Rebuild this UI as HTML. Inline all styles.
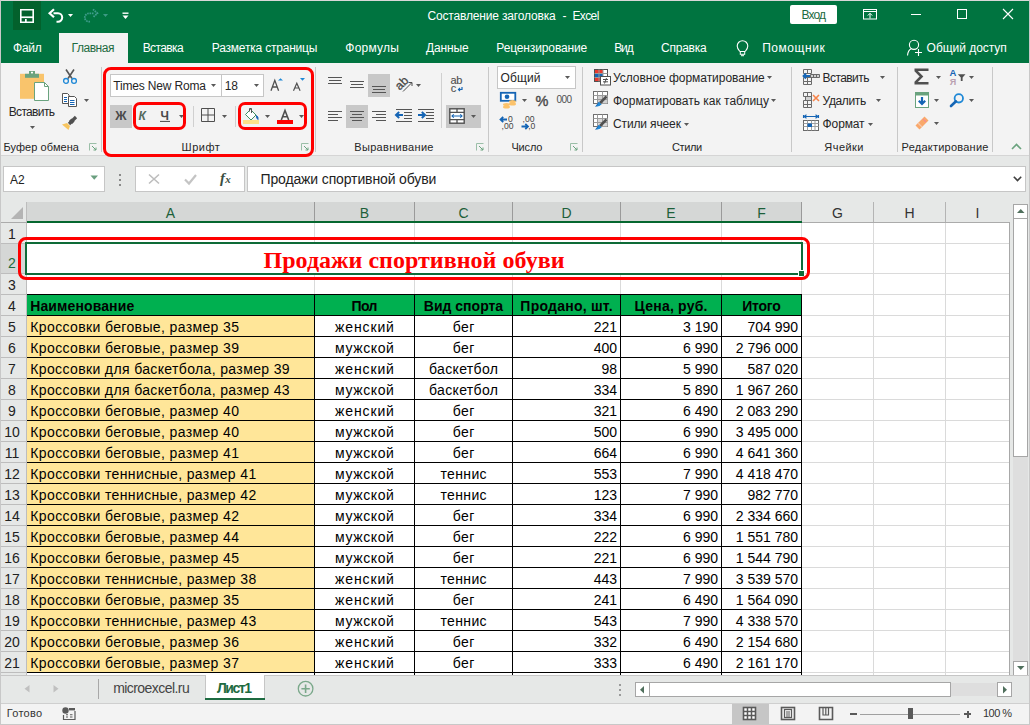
<!DOCTYPE html>
<html><head><meta charset="utf-8"><title>Excel</title>
<style>
html,body{margin:0;padding:0;}
body{width:1030px;height:725px;overflow:hidden;position:relative;background:#f3f3f3;font-family:"Liberation Sans",sans-serif;}
body>div,body>span,body>svg{position:absolute;}
.t{white-space:pre;line-height:1;}
svg{overflow:visible;}
</style></head><body>
<div style="left:0px;top:0px;width:1030px;height:725px;background:#f3f3f3;"></div>
<div style="left:1px;top:1px;width:1028px;height:62px;background:#007440;"></div>
<div style="left:13px;top:1px;width:28px;height:29px;background:#03612c;"></div>
<div style="left:59px;top:33px;width:69px;height:30px;background:#f3f3f3;"></div>
<svg style="left:19px;top:8px;" width="16" height="16" viewBox="0 0 16 16">
<path d="M1.8 1.8H14.2V14.2H1.8Z" fill="none" stroke="#fff" stroke-width="1.6"/>
<rect x="1.8" y="8.4" width="12.4" height="1.7" fill="#fff"/>
<rect x="6" y="11" width="1.7" height="3.5" fill="#fff"/>
</svg>
<svg style="left:47px;top:7px;" width="18" height="16" viewBox="0 0 18 16">
<path d="M7 2.3L2.6 6.3L7 10.3" fill="none" stroke="#fff" stroke-width="2.2"/>
<path d="M6.5 6.3H11A4.2 4.2 0 0 1 11 14.7H9.5" fill="none" stroke="#fff" stroke-width="2"/>
</svg>
<svg style="left:68px;top:14px;" width="5" height="3" viewBox="0 0 5 3"><path d="M0 0H5L2.5 3Z" fill="#fff"/></svg>
<svg style="left:82px;top:7px;" width="18" height="16" viewBox="0 0 18 16">
<path d="M11 2.3L15.4 6.3L11 10.3" fill="none" stroke="#3f9d8c" stroke-width="1.8" stroke-dasharray="1.6 0.8"/>
<path d="M11.5 6.3H7A4.2 4.2 0 0 0 7 14.7H8.5" fill="none" stroke="#3f9d8c" stroke-width="1.8" stroke-dasharray="1.6 0.8"/>
</svg>
<svg style="left:103px;top:14px;" width="5" height="3" viewBox="0 0 5 3"><path d="M0 0H5L2.5 3Z" fill="#3d9a85"/></svg>
<svg style="left:122px;top:12px;" width="7" height="8" viewBox="0 0 7 8"><rect x="0.5" y="0.5" width="6" height="1.4" fill="#fff"/><path d="M0.5 3.5H6.5L3.5 7Z" fill="#fff"/></svg>
<svg style="left:862px;top:8px;" width="16" height="12" viewBox="0 0 16 12">
<rect x="1.5" y="1.5" width="13" height="9.5" fill="none" stroke="#fff" stroke-width="1"/>
<path d="M1.5 3.5H14.5M8 10.5V5.5M5.8 7.5L8 5.3L10.2 7.5" fill="none" stroke="#fff" stroke-width="1"/>
</svg>
<div style="left:911px;top:14px;width:10px;height:1px;background:#fff;"></div>
<div style="left:957px;top:9px;width:10px;height:10px;border:1px solid #fff;box-sizing:border-box;"></div>
<svg style="left:1002px;top:8px;" width="12" height="12" viewBox="0 0 12 12"><path d="M1 1L11 11M11 1L1 11" stroke="#fff" stroke-width="1.1"/></svg>
<svg style="left:735px;top:39px;" width="15" height="19" viewBox="0 0 15 19">
<path d="M4.8 12.5C3 10.5 2.2 9 2.2 7A5.3 5.3 0 0 1 12.8 7C12.8 9 12 10.5 10.2 12.5" fill="none" stroke="#fff" stroke-width="1.1"/>
<rect x="5.3" y="12.5" width="4.4" height="2.8" fill="none" stroke="#fff" stroke-width="1"/>
<rect x="6" y="16.2" width="3" height="1" fill="#fff"/>
</svg>
<svg style="left:905px;top:38px;" width="20" height="20" viewBox="0 0 20 20">
<circle cx="9" cy="6.8" r="4.6" fill="none" stroke="#fff" stroke-width="1.1"/>
<path d="M6.3 10.7Q3 12 2.5 17.5" fill="none" stroke="#fff" stroke-width="1.1"/>
<path d="M13.5 11V18M10 14.5H17" stroke="#fff" stroke-width="1.1"/>
</svg>
<span class="t" style="top:9.84px;color:#fff;font-size:12px;font-family:'Liberation Sans', sans-serif;font-weight:normal;letter-spacing:-0.168px;left:427.5px;">Составление заголовка</span>
<span class="t" style="top:9.84px;color:#fff;font-size:12px;font-family:'Liberation Sans', sans-serif;font-weight:normal;left:562.6px;">-</span>
<span class="t" style="top:9.84px;color:#fff;font-size:12px;font-family:'Liberation Sans', sans-serif;font-weight:normal;letter-spacing:-0.636px;left:572.5px;">Excel</span>
<div style="left:790px;top:5px;width:47px;height:19px;background:#fff;border-radius:2px;"></div>
<span class="t" style="top:8.84px;color:#1d6b41;font-size:12px;font-family:'Liberation Sans', sans-serif;font-weight:normal;letter-spacing:-0.919px;left:801.6px;">Вход</span>
<span class="t" style="top:41.84px;color:#fff;font-size:12px;font-family:'Liberation Sans', sans-serif;font-weight:normal;letter-spacing:-0.305px;left:13.1px;">Файл</span>
<span class="t" style="top:41.84px;color:#1e6b41;font-size:12px;font-family:'Liberation Sans', sans-serif;font-weight:normal;letter-spacing:-0.448px;left:71.5px;">Главная</span>
<span class="t" style="top:41.84px;color:#fff;font-size:12px;font-family:'Liberation Sans', sans-serif;font-weight:normal;letter-spacing:-0.602px;left:142.7px;">Вставка</span>
<span class="t" style="top:41.84px;color:#fff;font-size:12px;font-family:'Liberation Sans', sans-serif;font-weight:normal;letter-spacing:-0.205px;left:211.8px;">Разметка страницы</span>
<span class="t" style="top:41.84px;color:#fff;font-size:12px;font-family:'Liberation Sans', sans-serif;font-weight:normal;letter-spacing:0.214px;left:345.3px;">Формулы</span>
<span class="t" style="top:41.84px;color:#fff;font-size:12px;font-family:'Liberation Sans', sans-serif;font-weight:normal;letter-spacing:-0.152px;left:426px;">Данные</span>
<span class="t" style="top:41.84px;color:#fff;font-size:12px;font-family:'Liberation Sans', sans-serif;font-weight:normal;letter-spacing:-0.129px;left:496.3px;">Рецензирование</span>
<span class="t" style="top:41.84px;color:#fff;font-size:12px;font-family:'Liberation Sans', sans-serif;font-weight:normal;letter-spacing:-1.109px;left:614.2px;">Вид</span>
<span class="t" style="top:41.84px;color:#fff;font-size:12px;font-family:'Liberation Sans', sans-serif;font-weight:normal;letter-spacing:-0.230px;left:661px;">Справка</span>
<span class="t" style="top:41.84px;color:#fff;font-size:12px;font-family:'Liberation Sans', sans-serif;font-weight:normal;letter-spacing:0.545px;left:762.2px;">Помощник</span>
<span class="t" style="top:41.84px;color:#fff;font-size:12px;font-family:'Liberation Sans', sans-serif;font-weight:normal;letter-spacing:-0.039px;left:926.6px;">Общий доступ</span>
<div style="left:1px;top:63px;width:1028px;height:92px;background:#f3f3f3;"></div>
<div style="left:1px;top:155px;width:1028px;height:1px;background:#d5d5d5;"></div>
<span class="t" style="top:141.69px;color:#262626;font-size:11px;font-family:'Liberation Sans', sans-serif;font-weight:normal;letter-spacing:0.077px;left:3.4px;">Буфер обмена</span>
<span class="t" style="top:141.69px;color:#262626;font-size:11px;font-family:'Liberation Sans', sans-serif;font-weight:normal;letter-spacing:0.499px;left:181.6px;">Шрифт</span>
<span class="t" style="top:141.69px;color:#262626;font-size:11px;font-family:'Liberation Sans', sans-serif;font-weight:normal;letter-spacing:0.316px;left:354.3px;">Выравнивание</span>
<span class="t" style="top:141.69px;color:#262626;font-size:11px;font-family:'Liberation Sans', sans-serif;font-weight:normal;letter-spacing:-0.160px;left:511.4px;">Число</span>
<span class="t" style="top:141.69px;color:#262626;font-size:11px;font-family:'Liberation Sans', sans-serif;font-weight:normal;letter-spacing:-0.351px;left:671.9px;">Стили</span>
<span class="t" style="top:141.69px;color:#262626;font-size:11px;font-family:'Liberation Sans', sans-serif;font-weight:normal;letter-spacing:0.459px;left:824.3px;">Ячейки</span>
<span class="t" style="top:141.69px;color:#262626;font-size:11px;font-family:'Liberation Sans', sans-serif;font-weight:normal;letter-spacing:0.231px;left:901.6px;">Редактирование</span>
<div style="left:101px;top:67px;width:1px;height:85px;background:#c8c8c8;"></div>
<div style="left:315px;top:67px;width:1px;height:85px;background:#c8c8c8;"></div>
<div style="left:488px;top:67px;width:1px;height:85px;background:#c8c8c8;"></div>
<div style="left:582px;top:67px;width:1px;height:85px;background:#c8c8c8;"></div>
<div style="left:791px;top:67px;width:1px;height:85px;background:#c8c8c8;"></div>
<div style="left:897px;top:67px;width:1px;height:85px;background:#c8c8c8;"></div>
<div style="left:992px;top:67px;width:1px;height:85px;background:#c8c8c8;"></div>
<svg style="left:19px;top:70px;" width="32" height="32" viewBox="0 0 32 32">
<rect x="1" y="3.8" width="24" height="25" fill="#f9c46c"/>
<rect x="6" y="3.8" width="14" height="4" fill="#6aa37e"/>
<rect x="10" y="1" width="6" height="3.5" fill="#6aa37e"/>
<rect x="12" y="1.8" width="2" height="1.6" fill="#fff"/>
<path d="M15.5 12.5H25.5L29.5 16.5V30.5H15.5Z" fill="#fff" stroke="#6aa37e" stroke-width="1"/>
<path d="M25.5 12.5V16.5H29.5" fill="none" stroke="#6aa37e" stroke-width="1"/>
</svg>
<span class="t" style="top:105.84px;color:#262626;font-size:12px;font-family:'Liberation Sans', sans-serif;font-weight:normal;letter-spacing:-0.654px;left:8.7px;">Вставить</span>
<svg style="left:30px;top:126px;" width="5" height="3" viewBox="0 0 5 3"><path d="M0 0H5L2.5 3Z" fill="#595959"/></svg>
<svg style="left:62px;top:68px;" width="16" height="16" viewBox="0 0 16 16">
<path d="M4 1.5L10 10.5M12 1.5L6 10.5" stroke="#555" stroke-width="1.6" fill="none"/>
<circle cx="4" cy="12.9" r="2.4" fill="none" stroke="#1e88d6" stroke-width="1.3"/>
<circle cx="12" cy="12.9" r="2.4" fill="none" stroke="#1e88d6" stroke-width="1.3"/>
</svg>
<svg style="left:61px;top:92px;" width="18" height="16" viewBox="0 0 18 16">
<path d="M1.5 1.5H6.5L8 3V11.5H1.5Z" fill="#fff" stroke="#555" stroke-width="1"/>
<path d="M3 5.5H6M3 7.5H6M3 9.5H6" stroke="#1565b5" stroke-width="1"/>
<path d="M7.5 4.5H13.5L15.5 6.5V14.5H7.5Z" fill="#fff" stroke="#555" stroke-width="1"/>
<path d="M9 8.5H13.5M9 10.5H13.5M9 12.5H13.5" stroke="#1565b5" stroke-width="1"/>
</svg>
<svg style="left:84px;top:99px;" width="5" height="3" viewBox="0 0 5 3"><path d="M0 0H5L2.5 3Z" fill="#595959"/></svg>
<svg style="left:61px;top:115px;" width="18" height="16" viewBox="0 0 18 16">
<path d="M8 9L15 2" stroke="#505050" stroke-width="3.2"/>
<path d="M9.5 7.5L12 5" stroke="#505050" stroke-width="4.5"/>
<path d="M1 9.5L6 8L9 11L7.5 15Z" fill="#f7c560"/>
</svg>
<svg style="left:89px;top:143px;" width="8" height="8" viewBox="0 0 8 8"><path d="M0.5 7.5V0.5H7.5" fill="none" stroke="#9bbfa8" stroke-width="1"/><path d="M3 3L7 7M7 4.5V7H4.5" fill="none" stroke="#6aa37e" stroke-width="1"/></svg>
<svg style="left:301px;top:143px;" width="8" height="8" viewBox="0 0 8 8"><path d="M0.5 7.5V0.5H7.5" fill="none" stroke="#9bbfa8" stroke-width="1"/><path d="M3 3L7 7M7 4.5V7H4.5" fill="none" stroke="#6aa37e" stroke-width="1"/></svg>
<svg style="left:476px;top:143px;" width="8" height="8" viewBox="0 0 8 8"><path d="M0.5 7.5V0.5H7.5" fill="none" stroke="#9bbfa8" stroke-width="1"/><path d="M3 3L7 7M7 4.5V7H4.5" fill="none" stroke="#6aa37e" stroke-width="1"/></svg>
<svg style="left:570px;top:143px;" width="8" height="8" viewBox="0 0 8 8"><path d="M0.5 7.5V0.5H7.5" fill="none" stroke="#9bbfa8" stroke-width="1"/><path d="M3 3L7 7M7 4.5V7H4.5" fill="none" stroke="#6aa37e" stroke-width="1"/></svg>
<div style="left:110px;top:74px;width:110px;height:21px;background:#fff;border:1px solid #c6c6c6;box-sizing:content-box;"></div>
<div style="left:221px;top:74px;width:41px;height:21px;background:#fff;border:1px solid #c6c6c6;box-sizing:content-box;"></div>
<span class="t" style="top:79.84px;color:#262626;font-size:12px;font-family:'Liberation Sans', sans-serif;font-weight:normal;letter-spacing:-0.170px;left:113.3px;">Times New Roma</span>
<svg style="left:211px;top:84.3px;" width="5" height="3" viewBox="0 0 5 3"><path d="M0 0H5L2.5 3Z" fill="#595959"/></svg>
<span class="t" style="top:79.84px;color:#262626;font-size:12px;font-family:'Liberation Sans', sans-serif;font-weight:normal;left:224.7px;">18</span>
<svg style="left:254px;top:84.3px;" width="5" height="3" viewBox="0 0 5 3"><path d="M0 0H5L2.5 3Z" fill="#595959"/></svg>
<svg style="left:270px;top:77px;" width="36" height="15" viewBox="0 0 36 15">
<path d="M1 13.7L4.8 3.3L8.6 13.7M2.4 10H7.2" fill="none" stroke="#505050" stroke-width="1.3"/>
<path d="M8 3.6L10.5 1.2L13 3.6Z" fill="#1e88d6"/>
<path d="M23.5 13.7L26.8 6.3L30.1 13.7M24.7 11H28.9" fill="none" stroke="#505050" stroke-width="1.2"/>
<path d="M30 1L35 1L32.5 3.8Z" fill="#1e88d6"/>
</svg>
<div style="left:110px;top:105px;width:22px;height:23px;background:#c8c8c8;"></div>
<svg style="left:113px;top:110px;" width="16" height="11" viewBox="0 0 16 11">
<text x="8" y="9.8" text-anchor="middle" font-family="Liberation Sans" font-weight="bold" font-size="12.5" fill="#4a4a4a">Ж</text>
</svg>
<svg style="left:137px;top:110px;" width="11" height="11" viewBox="0 0 11 11">
<text x="5.2" y="9.8" text-anchor="middle" font-family="Liberation Sans" font-weight="bold" font-style="italic" font-size="12" fill="#566a5c">К</text>
</svg>
<svg style="left:159px;top:110px;" width="12" height="13" viewBox="0 0 12 13">
<text x="5.8" y="9.8" text-anchor="middle" font-family="Liberation Sans" font-weight="bold" font-size="12" fill="#4a4a4a">Ч</text>
<rect x="1" y="10.9" width="10" height="1" fill="#4a4a4a"/>
</svg>
<svg style="left:179px;top:115px;" width="5" height="3" viewBox="0 0 5 3"><path d="M0 0H5L2.5 3Z" fill="#595959"/></svg>
<div style="left:193px;top:106px;width:1px;height:21px;background:#d0d0d0;"></div>
<svg style="left:201px;top:108px;" width="14" height="14" viewBox="0 0 14 14">
<path d="M0.5 0.5H13.5V13.5H0.5ZM7 0.5V13.5M0.5 7H13.5" fill="none" stroke="#4f4f4f" stroke-width="1"/>
</svg>
<svg style="left:222px;top:115px;" width="5" height="3" viewBox="0 0 5 3"><path d="M0 0H5L2.5 3Z" fill="#595959"/></svg>
<div style="left:235px;top:106px;width:1px;height:21px;background:#d0d0d0;"></div>
<svg style="left:243px;top:107px;" width="17" height="17" viewBox="0 0 17 17">
<path d="M2.5 7.5L7.5 2.5L13 8L8 13Z" fill="#fff" stroke="#3d8f62" stroke-width="1"/>
<path d="M6.5 4.5V1.5H8.5V6" fill="none" stroke="#555" stroke-width="1"/>
<path d="M13.5 8.5Q15.5 10 15 12.5Q13 11 13.5 8.5Z" fill="#1565b5" stroke="#1565b5" stroke-width="1"/>
<rect x="0" y="13" width="16" height="4" fill="#fde28a"/>
</svg>
<svg style="left:265px;top:115px;" width="5" height="3" viewBox="0 0 5 3"><path d="M0 0H5L2.5 3Z" fill="#595959"/></svg>
<svg style="left:277px;top:109px;" width="16" height="15" viewBox="0 0 16 15">
<path d="M4.3 11L8 1.5L11.7 11M5.6 7.7H10.4" fill="none" stroke="#505050" stroke-width="1.6"/>
<rect x="0" y="11" width="16" height="4" fill="#f00"/>
</svg>
<svg style="left:299px;top:115px;" width="5" height="3" viewBox="0 0 5 3"><path d="M0 0H5L2.5 3Z" fill="#595959"/></svg>
<div style="left:368px;top:74px;width:22px;height:23px;background:#c8c8c8;"></div>
<div style="left:346px;top:105px;width:22px;height:23px;background:#c8c8c8;"></div>
<div style="left:446px;top:105px;width:35px;height:23px;background:#c8c8c8;"></div>
<div style="left:328px;top:77px;width:14px;height:1px;background:#555;"></div>
<div style="left:329px;top:80px;width:12px;height:1px;background:#555;"></div>
<div style="left:328px;top:83px;width:14px;height:1px;background:#555;"></div>
<div style="left:350px;top:81px;width:14px;height:1px;background:#555;"></div>
<div style="left:351px;top:84px;width:12px;height:1px;background:#555;"></div>
<div style="left:350px;top:87px;width:14px;height:1px;background:#555;"></div>
<div style="left:372px;top:86px;width:14px;height:1px;background:#555;"></div>
<div style="left:373px;top:89px;width:12px;height:1px;background:#555;"></div>
<div style="left:372px;top:92px;width:14px;height:1px;background:#555;"></div>
<svg style="left:394px;top:75px;" width="20" height="18" viewBox="0 0 20 18">
<text x="0" y="0" transform="translate(7.6 8.2) rotate(-45)" text-anchor="middle" font-family="Liberation Sans" font-size="12" fill="#454545" dy="4" stroke="#454545" stroke-width="0.3">ab</text>
<path d="M9 16.5L17.5 8" stroke="#4d4d4d" stroke-width="1"/>
<path d="M14.5 7.5H18V11" fill="none" stroke="#4d4d4d" stroke-width="1"/>
</svg>
<svg style="left:416px;top:84px;" width="5" height="3" viewBox="0 0 5 3"><path d="M0 0H5L2.5 3Z" fill="#595959"/></svg>
<div style="left:328px;top:111px;width:14px;height:1px;background:#555;"></div>
<div style="left:328px;top:114px;width:10px;height:1px;background:#555;"></div>
<div style="left:328px;top:117px;width:14px;height:1px;background:#555;"></div>
<div style="left:328px;top:120px;width:10px;height:1px;background:#555;"></div>
<div style="left:350px;top:111px;width:14px;height:1px;background:#555;"></div>
<div style="left:352px;top:114px;width:10px;height:1px;background:#555;"></div>
<div style="left:350px;top:117px;width:14px;height:1px;background:#555;"></div>
<div style="left:352px;top:120px;width:10px;height:1px;background:#555;"></div>
<div style="left:372px;top:111px;width:14px;height:1px;background:#555;"></div>
<div style="left:376px;top:114px;width:10px;height:1px;background:#555;"></div>
<div style="left:372px;top:117px;width:14px;height:1px;background:#555;"></div>
<div style="left:376px;top:120px;width:10px;height:1px;background:#555;"></div>
<div style="left:396px;top:109px;width:16px;height:1px;background:#555;"></div>
<div style="left:404px;top:112px;width:8px;height:1px;background:#555;"></div>
<div style="left:404px;top:115px;width:8px;height:1px;background:#555;"></div>
<div style="left:404px;top:118px;width:8px;height:1px;background:#555;"></div>
<div style="left:396px;top:121px;width:16px;height:1px;background:#555;"></div>
<svg style="left:395px;top:111px;" width="9" height="8" viewBox="0 0 9 8"><path d="M1 4H8M4.2 1L1 4L4.2 7" fill="none" stroke="#1565b5" stroke-width="2"/></svg>
<div style="left:418px;top:109px;width:16px;height:1px;background:#555;"></div>
<div style="left:426px;top:112px;width:8px;height:1px;background:#555;"></div>
<div style="left:426px;top:115px;width:8px;height:1px;background:#555;"></div>
<div style="left:426px;top:118px;width:8px;height:1px;background:#555;"></div>
<div style="left:418px;top:121px;width:16px;height:1px;background:#555;"></div>
<svg style="left:418px;top:111px;" width="9" height="8" viewBox="0 0 9 8"><path d="M0 4H7M3.8 1L7 4L3.8 7" fill="none" stroke="#1565b5" stroke-width="2"/></svg>
<div style="left:441px;top:73px;width:1px;height:55px;background:#d0d0d0;"></div>
<svg style="left:449px;top:75px;" width="16" height="18" viewBox="0 0 16 18">
<text x="1.5" y="9.3" font-family="Liberation Sans" font-size="11" fill="#505050" stroke="#505050" stroke-width="0.12" letter-spacing="-0.3">ab</text>
<text x="1.8" y="16.9" font-family="Liberation Sans" font-size="11" fill="#505050" stroke="#505050" stroke-width="0.12">c</text>
<path d="M13 12V14.5H9.5M11 13L9.5 14.5L11 16" fill="none" stroke="#1565b5" stroke-width="1.2"/>
</svg>
<svg style="left:449px;top:108px;" width="16" height="16" viewBox="0 0 16 16">
<rect x="0.8" y="0.8" width="14.4" height="14.4" fill="#fff" stroke="#505050" stroke-width="1.4"/>
<path d="M0.8 4.3H15.2M0.8 11.7H15.2M8 0.8V4.3M8 11.7V15.2" stroke="#505050" stroke-width="1.3"/>
<path d="M3.2 8H12.8" stroke="#1565b5" stroke-width="1"/>
<path d="M4.8 6.3L3 8L4.8 9.7M11.2 6.3L13 8L11.2 9.7" fill="none" stroke="#1565b5" stroke-width="1.1"/>
</svg>
<svg style="left:471px;top:115px;" width="5" height="3" viewBox="0 0 5 3"><path d="M0 0H5L2.5 3Z" fill="#595959"/></svg>
<div style="left:497px;top:66px;width:77px;height:21px;background:#fff;border:1px solid #c6c6c6;box-sizing:content-box;"></div>
<span class="t" style="top:71.84px;color:#262626;font-size:12px;font-family:'Liberation Sans', sans-serif;font-weight:normal;letter-spacing:0.125px;left:500.5px;">Общий</span>
<svg style="left:565px;top:76px;" width="5" height="3" viewBox="0 0 5 3"><path d="M0 0H5L2.5 3Z" fill="#595959"/></svg>
<svg style="left:499px;top:91px;" width="20" height="18" viewBox="0 0 20 18">
<rect x="1.8" y="1.8" width="14.5" height="8" fill="#fff" stroke="#1565b5" stroke-width="1.8"/>
<circle cx="8" cy="5.8" r="2.3" fill="#1565b5"/>
<ellipse cx="13.5" cy="10.5" rx="3.5" ry="1.5" fill="#fbc26b"/>
<ellipse cx="13.5" cy="13" rx="3.5" ry="1.5" fill="#fbc26b"/>
<ellipse cx="7.5" cy="13.5" rx="3.5" ry="1.5" fill="#fbc26b"/>
<ellipse cx="7.5" cy="16" rx="3.5" ry="1.5" fill="#fbc26b"/>
</svg>
<svg style="left:522px;top:99px;" width="5" height="3" viewBox="0 0 5 3"><path d="M0 0H5L2.5 3Z" fill="#595959"/></svg>
<svg style="left:535px;top:93px;" width="16" height="15" viewBox="0 0 16 15"><text x="7" y="12.8" text-anchor="middle" font-family="Liberation Sans" font-size="14.5" fill="#4a4a4a" stroke="#4a4a4a" stroke-width="0.4">%</text></svg>
<svg style="left:555px;top:94px;" width="18" height="10" viewBox="0 0 18 10"><text x="9" y="8.9" text-anchor="middle" font-family="Liberation Sans" font-size="10" fill="#505050" letter-spacing="-0.5">000</text></svg>
<svg style="left:499px;top:115px;" width="18" height="16" viewBox="0 0 18 16">
<path d="M1.5 4.5H8M4.2 1.8L1.5 4.5L4.2 7.2" fill="none" stroke="#1565b5" stroke-width="1.8"/>
<text x="9" y="6.8" font-family="Liberation Sans" font-size="8.6" fill="#454545">0</text>
<text x="2.6" y="14" font-family="Liberation Sans" font-size="8.6" fill="#454545">,00</text>
</svg>
<svg style="left:520px;top:115px;" width="18" height="16" viewBox="0 0 18 16">
<text x="2.6" y="6.8" font-family="Liberation Sans" font-size="8.6" fill="#454545">,00</text>
<path d="M1.5 11.5H8M5.3 8.8L8 11.5L5.3 14.2" fill="none" stroke="#1565b5" stroke-width="1.8"/>
<text x="8.2" y="14" font-family="Liberation Sans" font-size="8.6" fill="#454545">,0</text>
</svg>
<svg style="left:593px;top:68px;" width="19" height="18" viewBox="0 0 19 18">
<rect x="1.5" y="1.5" width="13" height="12" fill="#fff" stroke="#505050" stroke-width="1"/>
<rect x="2" y="2" width="8" height="3" fill="#e8392e"/>
<rect x="2" y="6" width="8" height="3" fill="#1565b5"/>
<rect x="2" y="10" width="5" height="3" fill="#e8392e"/>
<path d="M6 1.5V13.5M10 1.5V13.5M1.5 5.5H14.5M1.5 9.5H14.5" stroke="#9a9a9a" stroke-width="1"/>
<rect x="7.5" y="8.5" width="10" height="8.5" fill="#fff" stroke="#505050" stroke-width="1"/>
<path d="M10 11.5H15M10 13.8H15M13.5 10L11.5 15.5" stroke="#505050" stroke-width="1" fill="none"/>
</svg>
<span class="t" style="top:71.54px;color:#262626;font-size:12px;font-family:'Liberation Sans', sans-serif;font-weight:normal;letter-spacing:-0.040px;left:613px;">Условное форматирование</span>
<svg style="left:767px;top:76px;" width="5" height="3" viewBox="0 0 5 3"><path d="M0 0H5L2.5 3Z" fill="#595959"/></svg>
<svg style="left:592px;top:90px;" width="18" height="18" viewBox="0 0 18 18">
<rect x="1.5" y="1.5" width="14" height="12" fill="#fff" stroke="#707070" stroke-width="1"/>
<rect x="5.5" y="5.5" width="10" height="8" fill="#d0d0d0"/>
<path d="M5.5 1.5V13.5M10.5 1.5V13.5M1.5 5.5H15.5M1.5 9.5H15.5" stroke="#9a9a9a" stroke-width="1"/>
<path d="M8 13L14.5 6.5" stroke="#505050" stroke-width="2.5"/>
<path d="M3 17L6.5 12L9.5 14.5Z" fill="#1565b5"/>
<path d="M4.5 16.5Q7 16.8 9.5 14.5L7 12Z" fill="#1e88d6"/>
</svg>
<span class="t" style="top:95.24px;color:#262626;font-size:12px;font-family:'Liberation Sans', sans-serif;font-weight:normal;letter-spacing:-0.006px;left:613px;">Форматировать как таблицу</span>
<svg style="left:771px;top:99px;" width="5" height="3" viewBox="0 0 5 3"><path d="M0 0H5L2.5 3Z" fill="#595959"/></svg>
<svg style="left:592px;top:113px;" width="18" height="18" viewBox="0 0 18 18">
<rect x="1.5" y="1.5" width="14" height="12" fill="#fff" stroke="#707070" stroke-width="1"/>
<rect x="5.5" y="5.5" width="10" height="8" fill="#d8d8d8"/>
<path d="M5.5 1.5V13.5M10.5 1.5V13.5M1.5 5.5H15.5M1.5 9.5H15.5" stroke="#9a9a9a" stroke-width="1"/>
<path d="M8 13L14.5 6.5" stroke="#505050" stroke-width="2.5"/>
<path d="M3 17L6.5 12L9.5 14.5Z" fill="#1565b5"/>
<path d="M4.5 16.5Q7 16.8 9.5 14.5L7 12Z" fill="#1e88d6"/>
</svg>
<span class="t" style="top:118.04px;color:#262626;font-size:12px;font-family:'Liberation Sans', sans-serif;font-weight:normal;letter-spacing:-0.137px;left:613px;">Стили ячеек</span>
<svg style="left:684px;top:122.5px;" width="5" height="3" viewBox="0 0 5 3"><path d="M0 0H5L2.5 3Z" fill="#595959"/></svg>
<svg style="left:802px;top:68px;" width="19" height="18" viewBox="0 0 19 18">
<path d="M1.5 1.5H9.5V5.5H1.5ZM1.5 9.5H9.5V13.5H1.5ZM1.5 13.5H9.5V16.5H1.5ZM5.5 9.5V16.5M5.5 1.5V5.5" fill="none" stroke="#6a6a6a" stroke-width="1"/>
<path d="M8.5 6.5H17.5V9.5H8.5ZM11.5 6.5V9.5M14.5 6.5V9.5" fill="#d0d0d0" stroke="#6a6a6a" stroke-width="1"/>
<path d="M1.5 8H8M4 5.5L1.5 8L4 10.5" fill="none" stroke="#1565b5" stroke-width="1.8"/>
</svg>
<span class="t" style="top:71.54px;color:#262626;font-size:12px;font-family:'Liberation Sans', sans-serif;font-weight:normal;letter-spacing:-0.582px;left:822.6px;">Вставить</span>
<svg style="left:880px;top:76px;" width="5" height="3" viewBox="0 0 5 3"><path d="M0 0H5L2.5 3Z" fill="#595959"/></svg>
<svg style="left:802px;top:91px;" width="19" height="18" viewBox="0 0 19 18">
<path d="M1.5 1.5H9.5V5.5H1.5ZM1.5 9.5H9.5V13.5H1.5ZM1.5 13.5H9.5V16.5H1.5ZM5.5 9.5V16.5M5.5 1.5V5.5" fill="none" stroke="#6a6a6a" stroke-width="1"/>
<rect x="3.5" y="5.5" width="6" height="4" fill="#d0d0d0" stroke="#6a6a6a" stroke-width="1"/>
<path d="M11 4L17 10M17 4L11 10" stroke="#f7844a" stroke-width="1.6"/>
</svg>
<span class="t" style="top:95.24px;color:#262626;font-size:12px;font-family:'Liberation Sans', sans-serif;font-weight:normal;letter-spacing:-0.371px;left:822.6px;">Удалить</span>
<svg style="left:876px;top:99px;" width="5" height="3" viewBox="0 0 5 3"><path d="M0 0H5L2.5 3Z" fill="#595959"/></svg>
<svg style="left:802px;top:114px;" width="19" height="18" viewBox="0 0 19 18">
<path d="M1.5 1V4M16.5 1V4M2 2.5H16M4.5 0.8L2 2.5L4.5 4.2M13.5 0.8L16 2.5L13.5 4.2" fill="none" stroke="#1565b5" stroke-width="1.1"/>
<rect x="1.5" y="6.5" width="15" height="10" fill="#fff" stroke="#6a6a6a" stroke-width="1"/>
<path d="M1.5 9.5H16.5M1.5 12.5H16.5M5.5 6.5V16.5M9.5 6.5V16.5M13 6.5V16.5" stroke="#a0a0a0" stroke-width="1"/>
<rect x="5.5" y="9.5" width="4.5" height="3.5" fill="#1565b5"/>
</svg>
<span class="t" style="top:118.04px;color:#262626;font-size:12px;font-family:'Liberation Sans', sans-serif;font-weight:normal;letter-spacing:-0.128px;left:822.6px;">Формат</span>
<svg style="left:868px;top:122.5px;" width="5" height="3" viewBox="0 0 5 3"><path d="M0 0H5L2.5 3Z" fill="#595959"/></svg>
<svg style="left:913px;top:68px;" width="17" height="17" viewBox="0 0 17 17"><path d="M1.5 1.8H15.5M1.5 15.2H15.5M2.2 2.2L8.5 8.5L2.2 14.8" fill="none" stroke="#505050" stroke-width="2.6"/></svg>
<svg style="left:936px;top:76px;" width="5" height="3" viewBox="0 0 5 3"><path d="M0 0H5L2.5 3Z" fill="#595959"/></svg>
<svg style="left:949px;top:67px;" width="18" height="19" viewBox="0 0 18 19">
<text x="4" y="8.5" text-anchor="middle" font-family="Liberation Sans" font-weight="bold" font-size="9.5" fill="#1565b5">А</text>
<text x="4" y="17.5" text-anchor="middle" font-family="Liberation Sans" font-weight="bold" font-size="9" fill="#b99fb0">Я</text>
<path d="M8.8 7.2H16.5L13.6 10.5V14H11.8V10.5Z" fill="#505050"/>
</svg>
<svg style="left:969px;top:76px;" width="5" height="3" viewBox="0 0 5 3"><path d="M0 0H5L2.5 3Z" fill="#595959"/></svg>
<svg style="left:914px;top:91px;" width="16" height="18" viewBox="0 0 16 18">
<rect x="1.5" y="1.5" width="13" height="15" fill="#fff" stroke="#6aa37e" stroke-width="1"/>
<rect x="1" y="1" width="14" height="3.5" fill="#6aa37e"/>
<path d="M8 6V13M4.8 9.8L8 13L11.2 9.8" fill="none" stroke="#1565b5" stroke-width="2.2"/>
</svg>
<svg style="left:934px;top:99px;" width="5" height="3" viewBox="0 0 5 3"><path d="M0 0H5L2.5 3Z" fill="#595959"/></svg>
<svg style="left:949px;top:92px;" width="17" height="16" viewBox="0 0 17 16">
<circle cx="9.8" cy="6.3" r="4.2" fill="none" stroke="#1e88d6" stroke-width="1.8"/>
<path d="M7 9.3L2 14" stroke="#1565b5" stroke-width="2.6" stroke-linecap="round"/>
</svg>
<svg style="left:969px;top:99px;" width="5" height="3" viewBox="0 0 5 3"><path d="M0 0H5L2.5 3Z" fill="#595959"/></svg>
<svg style="left:914px;top:115px;" width="16" height="15" viewBox="0 0 16 15">
<path d="M1.5 10.5L10.5 1.5L14.5 5.5L5.5 14.5Z" fill="#f9a86b"/>
<path d="M4 8L8 12" stroke="#f6c7a8" stroke-width="1.2"/>
<path d="M9 4L12 7" stroke="#f472b6" stroke-width="0.8"/>
</svg>
<svg style="left:934px;top:122px;" width="5" height="3" viewBox="0 0 5 3"><path d="M0 0H5L2.5 3Z" fill="#595959"/></svg>
<svg style="left:1011px;top:143px;" width="11" height="7" viewBox="0 0 11 7"><path d="M1 6L5.5 1.5L10 6" fill="none" stroke="#6aa37e" stroke-width="1.6"/></svg>
<div style="left:1px;top:156px;width:1028px;height:46px;background:#e6e8e7;"></div>
<div style="left:3px;top:166px;width:100px;height:24px;background:#fff;border:1px solid #c6c6c6;"></div>
<span class="t" style="top:173.84px;color:#222;font-size:12px;font-family:'Liberation Sans', sans-serif;font-weight:normal;left:10px;">A2</span>
<div style="left:135px;top:166px;width:108px;height:24px;background:#fff;border:1px solid #c6c6c6;"></div>
<div style="left:247px;top:166px;width:777px;height:24px;background:#fff;border:1px solid #c6c6c6;"></div>
<svg style="left:90px;top:175px;" width="9" height="6" viewBox="0 0 9 6"><path d="M0.5 0.5H8L4.25 4.8Z" fill="#6a9f7f"/></svg>
<div style="left:119px;top:174px;width:2px;height:2px;background:#8a8a8a;"></div>
<div style="left:119px;top:179px;width:2px;height:2px;background:#8a8a8a;"></div>
<div style="left:119px;top:184px;width:2px;height:2px;background:#8a8a8a;"></div>
<svg style="left:148px;top:174px;" width="12" height="10" viewBox="0 0 12 10"><path d="M1 0.5L11 9.5M11 0.5L1 9.5" stroke="#bdbdbd" stroke-width="1.6"/></svg>
<svg style="left:184px;top:174px;" width="13" height="11" viewBox="0 0 13 11"><path d="M1 5.5L5 9.5L12 1" fill="none" stroke="#c4c4c4" stroke-width="2.2"/></svg>
<svg style="left:218px;top:171px;" width="16" height="16" viewBox="0 0 16 16"><text x="2" y="12.3" font-family="Liberation Serif" font-style="italic" font-weight="bold" font-size="15" fill="#3a4f42">f</text><text x="7.3" y="12.3" font-family="Liberation Serif" font-style="italic" font-weight="bold" font-size="11" fill="#3a4f42">x</text></svg>
<svg style="left:1013px;top:176px;" width="9" height="6" viewBox="0 0 9 6"><path d="M0.8 0.8L4.5 4.5L8.2 0.8" fill="none" stroke="#404040" stroke-width="1.6"/></svg>
<span class="t" style="top:172.15px;color:#222;font-size:14px;font-family:'Liberation Sans', sans-serif;font-weight:normal;letter-spacing:-0.133px;left:260.5px;">Продажи спортивной обуви</span>
<div style="left:1px;top:202px;width:1011px;height:20px;background:#e6e8e7;"></div>
<div style="left:27px;top:202px;width:774px;height:19px;background:#d5d7d6;"></div>
<div style="left:27px;top:221px;width:775px;height:2px;background:#05672f;"></div>
<div style="left:27px;top:223px;width:983px;height:452px;background:#fff;"></div>
<div style="left:1px;top:223px;width:25px;height:452px;background:#e6e8e7;"></div>
<div style="left:1px;top:244px;width:25px;height:29px;background:#d5d7d6;"></div>
<div style="left:314px;top:223px;width:1px;height:452px;background:#dadada;"></div>
<div style="left:314px;top:202px;width:1px;height:20px;background:#9a9a9a;"></div>
<div style="left:414px;top:223px;width:1px;height:452px;background:#dadada;"></div>
<div style="left:414px;top:202px;width:1px;height:20px;background:#9a9a9a;"></div>
<div style="left:512px;top:223px;width:1px;height:452px;background:#dadada;"></div>
<div style="left:512px;top:202px;width:1px;height:20px;background:#9a9a9a;"></div>
<div style="left:620px;top:223px;width:1px;height:452px;background:#dadada;"></div>
<div style="left:620px;top:202px;width:1px;height:20px;background:#9a9a9a;"></div>
<div style="left:721px;top:223px;width:1px;height:452px;background:#dadada;"></div>
<div style="left:721px;top:202px;width:1px;height:20px;background:#9a9a9a;"></div>
<div style="left:801px;top:223px;width:1px;height:452px;background:#dadada;"></div>
<div style="left:801px;top:202px;width:1px;height:20px;background:#9a9a9a;"></div>
<div style="left:873px;top:223px;width:1px;height:452px;background:#dadada;"></div>
<div style="left:873px;top:202px;width:1px;height:20px;background:#b4b4b4;"></div>
<div style="left:945px;top:223px;width:1px;height:452px;background:#dadada;"></div>
<div style="left:945px;top:202px;width:1px;height:20px;background:#b4b4b4;"></div>
<div style="left:26px;top:202px;width:1px;height:473px;background:#bdbdbd;"></div>
<div style="left:27px;top:243px;width:983px;height:1px;background:#dadada;"></div>
<div style="left:1px;top:243px;width:25px;height:1px;background:#bdbdbd;"></div>
<div style="left:27px;top:273px;width:983px;height:1px;background:#dadada;"></div>
<div style="left:1px;top:273px;width:25px;height:1px;background:#bdbdbd;"></div>
<div style="left:27px;top:294px;width:983px;height:1px;background:#dadada;"></div>
<div style="left:1px;top:294px;width:25px;height:1px;background:#bdbdbd;"></div>
<div style="left:27px;top:315px;width:983px;height:1px;background:#dadada;"></div>
<div style="left:1px;top:315px;width:25px;height:1px;background:#bdbdbd;"></div>
<div style="left:27px;top:336px;width:983px;height:1px;background:#dadada;"></div>
<div style="left:1px;top:336px;width:25px;height:1px;background:#bdbdbd;"></div>
<div style="left:27px;top:357px;width:983px;height:1px;background:#dadada;"></div>
<div style="left:1px;top:357px;width:25px;height:1px;background:#bdbdbd;"></div>
<div style="left:27px;top:378px;width:983px;height:1px;background:#dadada;"></div>
<div style="left:1px;top:378px;width:25px;height:1px;background:#bdbdbd;"></div>
<div style="left:27px;top:399px;width:983px;height:1px;background:#dadada;"></div>
<div style="left:1px;top:399px;width:25px;height:1px;background:#bdbdbd;"></div>
<div style="left:27px;top:420px;width:983px;height:1px;background:#dadada;"></div>
<div style="left:1px;top:420px;width:25px;height:1px;background:#bdbdbd;"></div>
<div style="left:27px;top:441px;width:983px;height:1px;background:#dadada;"></div>
<div style="left:1px;top:441px;width:25px;height:1px;background:#bdbdbd;"></div>
<div style="left:27px;top:462px;width:983px;height:1px;background:#dadada;"></div>
<div style="left:1px;top:462px;width:25px;height:1px;background:#bdbdbd;"></div>
<div style="left:27px;top:483px;width:983px;height:1px;background:#dadada;"></div>
<div style="left:1px;top:483px;width:25px;height:1px;background:#bdbdbd;"></div>
<div style="left:27px;top:504px;width:983px;height:1px;background:#dadada;"></div>
<div style="left:1px;top:504px;width:25px;height:1px;background:#bdbdbd;"></div>
<div style="left:27px;top:525px;width:983px;height:1px;background:#dadada;"></div>
<div style="left:1px;top:525px;width:25px;height:1px;background:#bdbdbd;"></div>
<div style="left:27px;top:546px;width:983px;height:1px;background:#dadada;"></div>
<div style="left:1px;top:546px;width:25px;height:1px;background:#bdbdbd;"></div>
<div style="left:27px;top:567px;width:983px;height:1px;background:#dadada;"></div>
<div style="left:1px;top:567px;width:25px;height:1px;background:#bdbdbd;"></div>
<div style="left:27px;top:588px;width:983px;height:1px;background:#dadada;"></div>
<div style="left:1px;top:588px;width:25px;height:1px;background:#bdbdbd;"></div>
<div style="left:27px;top:609px;width:983px;height:1px;background:#dadada;"></div>
<div style="left:1px;top:609px;width:25px;height:1px;background:#bdbdbd;"></div>
<div style="left:27px;top:630px;width:983px;height:1px;background:#dadada;"></div>
<div style="left:1px;top:630px;width:25px;height:1px;background:#bdbdbd;"></div>
<div style="left:27px;top:651px;width:983px;height:1px;background:#dadada;"></div>
<div style="left:1px;top:651px;width:25px;height:1px;background:#bdbdbd;"></div>
<div style="left:27px;top:672px;width:983px;height:1px;background:#dadada;"></div>
<div style="left:1px;top:672px;width:25px;height:1px;background:#bdbdbd;"></div>
<div style="left:1px;top:222px;width:1009px;height:1px;background:#ababab;"></div>
<div style="left:27px;top:221px;width:775px;height:2px;background:#05672f;"></div>
<svg style="left:10px;top:206px;" width="14" height="14" viewBox="0 0 14 14"><path d="M13 1V13H1Z" fill="#b4b4b4"/></svg>
<span class="t" style="top:206.15px;color:#1d5f3a;font-size:14px;font-family:'Liberation Sans', sans-serif;font-weight:normal;left:-329.50px;width:1000px;text-align:center;">A</span>
<span class="t" style="top:206.15px;color:#1d5f3a;font-size:14px;font-family:'Liberation Sans', sans-serif;font-weight:normal;left:-135.50px;width:1000px;text-align:center;">B</span>
<span class="t" style="top:206.15px;color:#1d5f3a;font-size:14px;font-family:'Liberation Sans', sans-serif;font-weight:normal;left:-36.50px;width:1000px;text-align:center;">C</span>
<span class="t" style="top:206.15px;color:#1d5f3a;font-size:14px;font-family:'Liberation Sans', sans-serif;font-weight:normal;left:66.50px;width:1000px;text-align:center;">D</span>
<span class="t" style="top:206.15px;color:#1d5f3a;font-size:14px;font-family:'Liberation Sans', sans-serif;font-weight:normal;left:171.00px;width:1000px;text-align:center;">E</span>
<span class="t" style="top:206.15px;color:#1d5f3a;font-size:14px;font-family:'Liberation Sans', sans-serif;font-weight:normal;left:261.50px;width:1000px;text-align:center;">F</span>
<span class="t" style="top:206.15px;color:#333;font-size:14px;font-family:'Liberation Sans', sans-serif;font-weight:normal;left:337.50px;width:1000px;text-align:center;">G</span>
<span class="t" style="top:206.15px;color:#333;font-size:14px;font-family:'Liberation Sans', sans-serif;font-weight:normal;left:409.50px;width:1000px;text-align:center;">H</span>
<span class="t" style="top:206.15px;color:#333;font-size:14px;font-family:'Liberation Sans', sans-serif;font-weight:normal;left:477.50px;width:1000px;text-align:center;">I</span>
<span class="t" style="top:227.15px;color:#222;font-size:14px;font-family:'Liberation Sans', sans-serif;font-weight:normal;left:-488.00px;width:1000px;text-align:center;">1</span>
<span class="t" style="top:256.15px;color:#1d6b41;font-size:14px;font-family:'Liberation Sans', sans-serif;font-weight:normal;left:-488.00px;width:1000px;text-align:center;">2</span>
<span class="t" style="top:278.15px;color:#222;font-size:14px;font-family:'Liberation Sans', sans-serif;font-weight:normal;left:-488.00px;width:1000px;text-align:center;">3</span>
<span class="t" style="top:299.15px;color:#222;font-size:14px;font-family:'Liberation Sans', sans-serif;font-weight:normal;left:-488.00px;width:1000px;text-align:center;">4</span>
<span class="t" style="top:320.15px;color:#222;font-size:14px;font-family:'Liberation Sans', sans-serif;font-weight:normal;left:-488.00px;width:1000px;text-align:center;">5</span>
<span class="t" style="top:341.15px;color:#222;font-size:14px;font-family:'Liberation Sans', sans-serif;font-weight:normal;left:-488.00px;width:1000px;text-align:center;">6</span>
<span class="t" style="top:362.15px;color:#222;font-size:14px;font-family:'Liberation Sans', sans-serif;font-weight:normal;left:-488.00px;width:1000px;text-align:center;">7</span>
<span class="t" style="top:383.15px;color:#222;font-size:14px;font-family:'Liberation Sans', sans-serif;font-weight:normal;left:-488.00px;width:1000px;text-align:center;">8</span>
<span class="t" style="top:404.15px;color:#222;font-size:14px;font-family:'Liberation Sans', sans-serif;font-weight:normal;left:-488.00px;width:1000px;text-align:center;">9</span>
<span class="t" style="top:425.15px;color:#222;font-size:14px;font-family:'Liberation Sans', sans-serif;font-weight:normal;left:-488.00px;width:1000px;text-align:center;">10</span>
<span class="t" style="top:446.15px;color:#222;font-size:14px;font-family:'Liberation Sans', sans-serif;font-weight:normal;left:-488.00px;width:1000px;text-align:center;">11</span>
<span class="t" style="top:467.15px;color:#222;font-size:14px;font-family:'Liberation Sans', sans-serif;font-weight:normal;left:-488.00px;width:1000px;text-align:center;">12</span>
<span class="t" style="top:488.15px;color:#222;font-size:14px;font-family:'Liberation Sans', sans-serif;font-weight:normal;left:-488.00px;width:1000px;text-align:center;">13</span>
<span class="t" style="top:509.15px;color:#222;font-size:14px;font-family:'Liberation Sans', sans-serif;font-weight:normal;left:-488.00px;width:1000px;text-align:center;">14</span>
<span class="t" style="top:530.15px;color:#222;font-size:14px;font-family:'Liberation Sans', sans-serif;font-weight:normal;left:-488.00px;width:1000px;text-align:center;">15</span>
<span class="t" style="top:551.15px;color:#222;font-size:14px;font-family:'Liberation Sans', sans-serif;font-weight:normal;left:-488.00px;width:1000px;text-align:center;">16</span>
<span class="t" style="top:572.15px;color:#222;font-size:14px;font-family:'Liberation Sans', sans-serif;font-weight:normal;left:-488.00px;width:1000px;text-align:center;">17</span>
<span class="t" style="top:593.15px;color:#222;font-size:14px;font-family:'Liberation Sans', sans-serif;font-weight:normal;left:-488.00px;width:1000px;text-align:center;">18</span>
<span class="t" style="top:614.15px;color:#222;font-size:14px;font-family:'Liberation Sans', sans-serif;font-weight:normal;left:-488.00px;width:1000px;text-align:center;">19</span>
<span class="t" style="top:635.15px;color:#222;font-size:14px;font-family:'Liberation Sans', sans-serif;font-weight:normal;left:-488.00px;width:1000px;text-align:center;">20</span>
<span class="t" style="top:656.15px;color:#222;font-size:14px;font-family:'Liberation Sans', sans-serif;font-weight:normal;left:-488.00px;width:1000px;text-align:center;">21</span>
<div style="left:27px;top:294px;width:775px;height:22px;background:#00b050;"></div>
<div style="left:27px;top:315px;width:288px;height:358px;background:#ffe699;"></div>
<div style="left:27px;top:294px;width:775px;height:1px;background:#000;"></div>
<div style="left:27px;top:315px;width:775px;height:1px;background:#000;"></div>
<div style="left:27px;top:336px;width:775px;height:1px;background:#000;"></div>
<div style="left:27px;top:357px;width:775px;height:1px;background:#000;"></div>
<div style="left:27px;top:378px;width:775px;height:1px;background:#000;"></div>
<div style="left:27px;top:399px;width:775px;height:1px;background:#000;"></div>
<div style="left:27px;top:420px;width:775px;height:1px;background:#000;"></div>
<div style="left:27px;top:441px;width:775px;height:1px;background:#000;"></div>
<div style="left:27px;top:462px;width:775px;height:1px;background:#000;"></div>
<div style="left:27px;top:483px;width:775px;height:1px;background:#000;"></div>
<div style="left:27px;top:504px;width:775px;height:1px;background:#000;"></div>
<div style="left:27px;top:525px;width:775px;height:1px;background:#000;"></div>
<div style="left:27px;top:546px;width:775px;height:1px;background:#000;"></div>
<div style="left:27px;top:567px;width:775px;height:1px;background:#000;"></div>
<div style="left:27px;top:588px;width:775px;height:1px;background:#000;"></div>
<div style="left:27px;top:609px;width:775px;height:1px;background:#000;"></div>
<div style="left:27px;top:630px;width:775px;height:1px;background:#000;"></div>
<div style="left:27px;top:651px;width:775px;height:1px;background:#000;"></div>
<div style="left:27px;top:672px;width:775px;height:1px;background:#000;"></div>
<div style="left:314px;top:294px;width:1px;height:381px;background:#000;"></div>
<div style="left:414px;top:294px;width:1px;height:381px;background:#000;"></div>
<div style="left:512px;top:294px;width:1px;height:381px;background:#000;"></div>
<div style="left:620px;top:294px;width:1px;height:381px;background:#000;"></div>
<div style="left:721px;top:294px;width:1px;height:381px;background:#000;"></div>
<div style="left:801px;top:294px;width:1px;height:381px;background:#000;"></div>
<span class="t" style="top:299.15px;color:#000;font-size:14px;font-family:'Liberation Sans', sans-serif;font-weight:bold;letter-spacing:0.116px;left:30.2px;">Наименование</span>
<span class="t" style="top:299.15px;color:#000;font-size:14px;font-family:'Liberation Sans', sans-serif;font-weight:bold;letter-spacing:-0.686px;left:-135.84px;width:1000px;text-align:center;">Пол</span>
<span class="t" style="top:299.15px;color:#000;font-size:14px;font-family:'Liberation Sans', sans-serif;font-weight:bold;left:-36.50px;width:1000px;text-align:center;">Вид спорта</span>
<span class="t" style="top:299.15px;color:#000;font-size:14px;font-family:'Liberation Sans', sans-serif;font-weight:bold;letter-spacing:0.242px;left:66.62px;width:1000px;text-align:center;">Продано, шт.</span>
<span class="t" style="top:299.15px;color:#000;font-size:14px;font-family:'Liberation Sans', sans-serif;font-weight:bold;letter-spacing:0.210px;left:171.11px;width:1000px;text-align:center;">Цена, руб.</span>
<span class="t" style="top:299.15px;color:#000;font-size:14px;font-family:'Liberation Sans', sans-serif;font-weight:bold;letter-spacing:-0.246px;left:261.38px;width:1000px;text-align:center;">Итого</span>
<span class="t" style="top:320.15px;color:#000;font-size:14px;font-family:'Liberation Sans', sans-serif;font-weight:normal;letter-spacing:0.368px;left:30.3px;">Кроссовки беговые, размер 35</span>
<span class="t" style="top:320.15px;color:#000;font-size:14px;font-family:'Liberation Sans', sans-serif;font-weight:normal;letter-spacing:0.857px;left:-135.07px;width:1000px;text-align:center;">женский</span>
<span class="t" style="top:320.15px;color:#000;font-size:14px;font-family:'Liberation Sans', sans-serif;font-weight:normal;letter-spacing:0.415px;left:-36.29px;width:1000px;text-align:center;">бег</span>
<span class="t" style="top:320.15px;color:#000;font-size:14px;font-family:'Liberation Sans', sans-serif;font-weight:normal;right:413.00px;">221</span>
<span class="t" style="top:320.15px;color:#000;font-size:14px;font-family:'Liberation Sans', sans-serif;font-weight:normal;right:312.00px;">3 190</span>
<span class="t" style="top:320.15px;color:#000;font-size:14px;font-family:'Liberation Sans', sans-serif;font-weight:normal;right:232.00px;">704 990</span>
<span class="t" style="top:341.15px;color:#000;font-size:14px;font-family:'Liberation Sans', sans-serif;font-weight:normal;letter-spacing:0.368px;left:30.3px;">Кроссовки беговые, размер 39</span>
<span class="t" style="top:341.15px;color:#000;font-size:14px;font-family:'Liberation Sans', sans-serif;font-weight:normal;letter-spacing:0.599px;left:-135.20px;width:1000px;text-align:center;">мужской</span>
<span class="t" style="top:341.15px;color:#000;font-size:14px;font-family:'Liberation Sans', sans-serif;font-weight:normal;letter-spacing:0.415px;left:-36.29px;width:1000px;text-align:center;">бег</span>
<span class="t" style="top:341.15px;color:#000;font-size:14px;font-family:'Liberation Sans', sans-serif;font-weight:normal;right:413.00px;">400</span>
<span class="t" style="top:341.15px;color:#000;font-size:14px;font-family:'Liberation Sans', sans-serif;font-weight:normal;right:312.00px;">6 990</span>
<span class="t" style="top:341.15px;color:#000;font-size:14px;font-family:'Liberation Sans', sans-serif;font-weight:normal;right:232.00px;">2 796 000</span>
<span class="t" style="top:362.15px;color:#000;font-size:14px;font-family:'Liberation Sans', sans-serif;font-weight:normal;letter-spacing:0.363px;left:30.3px;">Кроссовки для баскетбола, размер 39</span>
<span class="t" style="top:362.15px;color:#000;font-size:14px;font-family:'Liberation Sans', sans-serif;font-weight:normal;letter-spacing:0.857px;left:-135.07px;width:1000px;text-align:center;">женский</span>
<span class="t" style="top:362.15px;color:#000;font-size:14px;font-family:'Liberation Sans', sans-serif;font-weight:normal;letter-spacing:0.331px;left:-36.33px;width:1000px;text-align:center;">баскетбол</span>
<span class="t" style="top:362.15px;color:#000;font-size:14px;font-family:'Liberation Sans', sans-serif;font-weight:normal;right:413.00px;">98</span>
<span class="t" style="top:362.15px;color:#000;font-size:14px;font-family:'Liberation Sans', sans-serif;font-weight:normal;right:312.00px;">5 990</span>
<span class="t" style="top:362.15px;color:#000;font-size:14px;font-family:'Liberation Sans', sans-serif;font-weight:normal;right:232.00px;">587 020</span>
<span class="t" style="top:383.15px;color:#000;font-size:14px;font-family:'Liberation Sans', sans-serif;font-weight:normal;letter-spacing:0.363px;left:30.3px;">Кроссовки для баскетбола, размер 43</span>
<span class="t" style="top:383.15px;color:#000;font-size:14px;font-family:'Liberation Sans', sans-serif;font-weight:normal;letter-spacing:0.599px;left:-135.20px;width:1000px;text-align:center;">мужской</span>
<span class="t" style="top:383.15px;color:#000;font-size:14px;font-family:'Liberation Sans', sans-serif;font-weight:normal;letter-spacing:0.331px;left:-36.33px;width:1000px;text-align:center;">баскетбол</span>
<span class="t" style="top:383.15px;color:#000;font-size:14px;font-family:'Liberation Sans', sans-serif;font-weight:normal;right:413.00px;">334</span>
<span class="t" style="top:383.15px;color:#000;font-size:14px;font-family:'Liberation Sans', sans-serif;font-weight:normal;right:312.00px;">5 890</span>
<span class="t" style="top:383.15px;color:#000;font-size:14px;font-family:'Liberation Sans', sans-serif;font-weight:normal;right:232.00px;">1 967 260</span>
<span class="t" style="top:404.15px;color:#000;font-size:14px;font-family:'Liberation Sans', sans-serif;font-weight:normal;letter-spacing:0.368px;left:30.3px;">Кроссовки беговые, размер 40</span>
<span class="t" style="top:404.15px;color:#000;font-size:14px;font-family:'Liberation Sans', sans-serif;font-weight:normal;letter-spacing:0.857px;left:-135.07px;width:1000px;text-align:center;">женский</span>
<span class="t" style="top:404.15px;color:#000;font-size:14px;font-family:'Liberation Sans', sans-serif;font-weight:normal;letter-spacing:0.415px;left:-36.29px;width:1000px;text-align:center;">бег</span>
<span class="t" style="top:404.15px;color:#000;font-size:14px;font-family:'Liberation Sans', sans-serif;font-weight:normal;right:413.00px;">321</span>
<span class="t" style="top:404.15px;color:#000;font-size:14px;font-family:'Liberation Sans', sans-serif;font-weight:normal;right:312.00px;">6 490</span>
<span class="t" style="top:404.15px;color:#000;font-size:14px;font-family:'Liberation Sans', sans-serif;font-weight:normal;right:232.00px;">2 083 290</span>
<span class="t" style="top:425.15px;color:#000;font-size:14px;font-family:'Liberation Sans', sans-serif;font-weight:normal;letter-spacing:0.368px;left:30.3px;">Кроссовки беговые, размер 40</span>
<span class="t" style="top:425.15px;color:#000;font-size:14px;font-family:'Liberation Sans', sans-serif;font-weight:normal;letter-spacing:0.599px;left:-135.20px;width:1000px;text-align:center;">мужской</span>
<span class="t" style="top:425.15px;color:#000;font-size:14px;font-family:'Liberation Sans', sans-serif;font-weight:normal;letter-spacing:0.415px;left:-36.29px;width:1000px;text-align:center;">бег</span>
<span class="t" style="top:425.15px;color:#000;font-size:14px;font-family:'Liberation Sans', sans-serif;font-weight:normal;right:413.00px;">500</span>
<span class="t" style="top:425.15px;color:#000;font-size:14px;font-family:'Liberation Sans', sans-serif;font-weight:normal;right:312.00px;">6 990</span>
<span class="t" style="top:425.15px;color:#000;font-size:14px;font-family:'Liberation Sans', sans-serif;font-weight:normal;right:232.00px;">3 495 000</span>
<span class="t" style="top:446.15px;color:#000;font-size:14px;font-family:'Liberation Sans', sans-serif;font-weight:normal;letter-spacing:0.368px;left:30.3px;">Кроссовки беговые, размер 41</span>
<span class="t" style="top:446.15px;color:#000;font-size:14px;font-family:'Liberation Sans', sans-serif;font-weight:normal;letter-spacing:0.599px;left:-135.20px;width:1000px;text-align:center;">мужской</span>
<span class="t" style="top:446.15px;color:#000;font-size:14px;font-family:'Liberation Sans', sans-serif;font-weight:normal;letter-spacing:0.415px;left:-36.29px;width:1000px;text-align:center;">бег</span>
<span class="t" style="top:446.15px;color:#000;font-size:14px;font-family:'Liberation Sans', sans-serif;font-weight:normal;right:413.00px;">664</span>
<span class="t" style="top:446.15px;color:#000;font-size:14px;font-family:'Liberation Sans', sans-serif;font-weight:normal;right:312.00px;">6 990</span>
<span class="t" style="top:446.15px;color:#000;font-size:14px;font-family:'Liberation Sans', sans-serif;font-weight:normal;right:232.00px;">4 641 360</span>
<span class="t" style="top:467.15px;color:#000;font-size:14px;font-family:'Liberation Sans', sans-serif;font-weight:normal;letter-spacing:0.371px;left:30.3px;">Кроссовки теннисные, размер 41</span>
<span class="t" style="top:467.15px;color:#000;font-size:14px;font-family:'Liberation Sans', sans-serif;font-weight:normal;letter-spacing:0.599px;left:-135.20px;width:1000px;text-align:center;">мужской</span>
<span class="t" style="top:467.15px;color:#000;font-size:14px;font-family:'Liberation Sans', sans-serif;font-weight:normal;letter-spacing:0.355px;left:-36.32px;width:1000px;text-align:center;">теннис</span>
<span class="t" style="top:467.15px;color:#000;font-size:14px;font-family:'Liberation Sans', sans-serif;font-weight:normal;right:413.00px;">553</span>
<span class="t" style="top:467.15px;color:#000;font-size:14px;font-family:'Liberation Sans', sans-serif;font-weight:normal;right:312.00px;">7 990</span>
<span class="t" style="top:467.15px;color:#000;font-size:14px;font-family:'Liberation Sans', sans-serif;font-weight:normal;right:232.00px;">4 418 470</span>
<span class="t" style="top:488.15px;color:#000;font-size:14px;font-family:'Liberation Sans', sans-serif;font-weight:normal;letter-spacing:0.371px;left:30.3px;">Кроссовки теннисные, размер 42</span>
<span class="t" style="top:488.15px;color:#000;font-size:14px;font-family:'Liberation Sans', sans-serif;font-weight:normal;letter-spacing:0.599px;left:-135.20px;width:1000px;text-align:center;">мужской</span>
<span class="t" style="top:488.15px;color:#000;font-size:14px;font-family:'Liberation Sans', sans-serif;font-weight:normal;letter-spacing:0.355px;left:-36.32px;width:1000px;text-align:center;">теннис</span>
<span class="t" style="top:488.15px;color:#000;font-size:14px;font-family:'Liberation Sans', sans-serif;font-weight:normal;right:413.00px;">123</span>
<span class="t" style="top:488.15px;color:#000;font-size:14px;font-family:'Liberation Sans', sans-serif;font-weight:normal;right:312.00px;">7 990</span>
<span class="t" style="top:488.15px;color:#000;font-size:14px;font-family:'Liberation Sans', sans-serif;font-weight:normal;right:232.00px;">982 770</span>
<span class="t" style="top:509.15px;color:#000;font-size:14px;font-family:'Liberation Sans', sans-serif;font-weight:normal;letter-spacing:0.368px;left:30.3px;">Кроссовки беговые, размер 42</span>
<span class="t" style="top:509.15px;color:#000;font-size:14px;font-family:'Liberation Sans', sans-serif;font-weight:normal;letter-spacing:0.599px;left:-135.20px;width:1000px;text-align:center;">мужской</span>
<span class="t" style="top:509.15px;color:#000;font-size:14px;font-family:'Liberation Sans', sans-serif;font-weight:normal;letter-spacing:0.415px;left:-36.29px;width:1000px;text-align:center;">бег</span>
<span class="t" style="top:509.15px;color:#000;font-size:14px;font-family:'Liberation Sans', sans-serif;font-weight:normal;right:413.00px;">334</span>
<span class="t" style="top:509.15px;color:#000;font-size:14px;font-family:'Liberation Sans', sans-serif;font-weight:normal;right:312.00px;">6 990</span>
<span class="t" style="top:509.15px;color:#000;font-size:14px;font-family:'Liberation Sans', sans-serif;font-weight:normal;right:232.00px;">2 334 660</span>
<span class="t" style="top:530.15px;color:#000;font-size:14px;font-family:'Liberation Sans', sans-serif;font-weight:normal;letter-spacing:0.368px;left:30.3px;">Кроссовки беговые, размер 44</span>
<span class="t" style="top:530.15px;color:#000;font-size:14px;font-family:'Liberation Sans', sans-serif;font-weight:normal;letter-spacing:0.599px;left:-135.20px;width:1000px;text-align:center;">мужской</span>
<span class="t" style="top:530.15px;color:#000;font-size:14px;font-family:'Liberation Sans', sans-serif;font-weight:normal;letter-spacing:0.415px;left:-36.29px;width:1000px;text-align:center;">бег</span>
<span class="t" style="top:530.15px;color:#000;font-size:14px;font-family:'Liberation Sans', sans-serif;font-weight:normal;right:413.00px;">222</span>
<span class="t" style="top:530.15px;color:#000;font-size:14px;font-family:'Liberation Sans', sans-serif;font-weight:normal;right:312.00px;">6 990</span>
<span class="t" style="top:530.15px;color:#000;font-size:14px;font-family:'Liberation Sans', sans-serif;font-weight:normal;right:232.00px;">1 551 780</span>
<span class="t" style="top:551.15px;color:#000;font-size:14px;font-family:'Liberation Sans', sans-serif;font-weight:normal;letter-spacing:0.368px;left:30.3px;">Кроссовки беговые, размер 45</span>
<span class="t" style="top:551.15px;color:#000;font-size:14px;font-family:'Liberation Sans', sans-serif;font-weight:normal;letter-spacing:0.599px;left:-135.20px;width:1000px;text-align:center;">мужской</span>
<span class="t" style="top:551.15px;color:#000;font-size:14px;font-family:'Liberation Sans', sans-serif;font-weight:normal;letter-spacing:0.415px;left:-36.29px;width:1000px;text-align:center;">бег</span>
<span class="t" style="top:551.15px;color:#000;font-size:14px;font-family:'Liberation Sans', sans-serif;font-weight:normal;right:413.00px;">221</span>
<span class="t" style="top:551.15px;color:#000;font-size:14px;font-family:'Liberation Sans', sans-serif;font-weight:normal;right:312.00px;">6 990</span>
<span class="t" style="top:551.15px;color:#000;font-size:14px;font-family:'Liberation Sans', sans-serif;font-weight:normal;right:232.00px;">1 544 790</span>
<span class="t" style="top:572.15px;color:#000;font-size:14px;font-family:'Liberation Sans', sans-serif;font-weight:normal;letter-spacing:0.371px;left:30.3px;">Кроссовки теннисные, размер 38</span>
<span class="t" style="top:572.15px;color:#000;font-size:14px;font-family:'Liberation Sans', sans-serif;font-weight:normal;letter-spacing:0.857px;left:-135.07px;width:1000px;text-align:center;">женский</span>
<span class="t" style="top:572.15px;color:#000;font-size:14px;font-family:'Liberation Sans', sans-serif;font-weight:normal;letter-spacing:0.355px;left:-36.32px;width:1000px;text-align:center;">теннис</span>
<span class="t" style="top:572.15px;color:#000;font-size:14px;font-family:'Liberation Sans', sans-serif;font-weight:normal;right:413.00px;">443</span>
<span class="t" style="top:572.15px;color:#000;font-size:14px;font-family:'Liberation Sans', sans-serif;font-weight:normal;right:312.00px;">7 990</span>
<span class="t" style="top:572.15px;color:#000;font-size:14px;font-family:'Liberation Sans', sans-serif;font-weight:normal;right:232.00px;">3 539 570</span>
<span class="t" style="top:593.15px;color:#000;font-size:14px;font-family:'Liberation Sans', sans-serif;font-weight:normal;letter-spacing:0.368px;left:30.3px;">Кроссовки беговые, размер 35</span>
<span class="t" style="top:593.15px;color:#000;font-size:14px;font-family:'Liberation Sans', sans-serif;font-weight:normal;letter-spacing:0.857px;left:-135.07px;width:1000px;text-align:center;">женский</span>
<span class="t" style="top:593.15px;color:#000;font-size:14px;font-family:'Liberation Sans', sans-serif;font-weight:normal;letter-spacing:0.415px;left:-36.29px;width:1000px;text-align:center;">бег</span>
<span class="t" style="top:593.15px;color:#000;font-size:14px;font-family:'Liberation Sans', sans-serif;font-weight:normal;right:413.00px;">241</span>
<span class="t" style="top:593.15px;color:#000;font-size:14px;font-family:'Liberation Sans', sans-serif;font-weight:normal;right:312.00px;">6 490</span>
<span class="t" style="top:593.15px;color:#000;font-size:14px;font-family:'Liberation Sans', sans-serif;font-weight:normal;right:232.00px;">1 564 090</span>
<span class="t" style="top:614.15px;color:#000;font-size:14px;font-family:'Liberation Sans', sans-serif;font-weight:normal;letter-spacing:0.371px;left:30.3px;">Кроссовки теннисные, размер 43</span>
<span class="t" style="top:614.15px;color:#000;font-size:14px;font-family:'Liberation Sans', sans-serif;font-weight:normal;letter-spacing:0.599px;left:-135.20px;width:1000px;text-align:center;">мужской</span>
<span class="t" style="top:614.15px;color:#000;font-size:14px;font-family:'Liberation Sans', sans-serif;font-weight:normal;letter-spacing:0.355px;left:-36.32px;width:1000px;text-align:center;">теннис</span>
<span class="t" style="top:614.15px;color:#000;font-size:14px;font-family:'Liberation Sans', sans-serif;font-weight:normal;right:413.00px;">543</span>
<span class="t" style="top:614.15px;color:#000;font-size:14px;font-family:'Liberation Sans', sans-serif;font-weight:normal;right:312.00px;">7 990</span>
<span class="t" style="top:614.15px;color:#000;font-size:14px;font-family:'Liberation Sans', sans-serif;font-weight:normal;right:232.00px;">4 338 570</span>
<span class="t" style="top:635.15px;color:#000;font-size:14px;font-family:'Liberation Sans', sans-serif;font-weight:normal;letter-spacing:0.368px;left:30.3px;">Кроссовки беговые, размер 36</span>
<span class="t" style="top:635.15px;color:#000;font-size:14px;font-family:'Liberation Sans', sans-serif;font-weight:normal;letter-spacing:0.857px;left:-135.07px;width:1000px;text-align:center;">женский</span>
<span class="t" style="top:635.15px;color:#000;font-size:14px;font-family:'Liberation Sans', sans-serif;font-weight:normal;letter-spacing:0.415px;left:-36.29px;width:1000px;text-align:center;">бег</span>
<span class="t" style="top:635.15px;color:#000;font-size:14px;font-family:'Liberation Sans', sans-serif;font-weight:normal;right:413.00px;">332</span>
<span class="t" style="top:635.15px;color:#000;font-size:14px;font-family:'Liberation Sans', sans-serif;font-weight:normal;right:312.00px;">6 490</span>
<span class="t" style="top:635.15px;color:#000;font-size:14px;font-family:'Liberation Sans', sans-serif;font-weight:normal;right:232.00px;">2 154 680</span>
<span class="t" style="top:656.15px;color:#000;font-size:14px;font-family:'Liberation Sans', sans-serif;font-weight:normal;letter-spacing:0.368px;left:30.3px;">Кроссовки беговые, размер 37</span>
<span class="t" style="top:656.15px;color:#000;font-size:14px;font-family:'Liberation Sans', sans-serif;font-weight:normal;letter-spacing:0.857px;left:-135.07px;width:1000px;text-align:center;">женский</span>
<span class="t" style="top:656.15px;color:#000;font-size:14px;font-family:'Liberation Sans', sans-serif;font-weight:normal;letter-spacing:0.415px;left:-36.29px;width:1000px;text-align:center;">бег</span>
<span class="t" style="top:656.15px;color:#000;font-size:14px;font-family:'Liberation Sans', sans-serif;font-weight:normal;right:413.00px;">333</span>
<span class="t" style="top:656.15px;color:#000;font-size:14px;font-family:'Liberation Sans', sans-serif;font-weight:normal;right:312.00px;">6 490</span>
<span class="t" style="top:656.15px;color:#000;font-size:14px;font-family:'Liberation Sans', sans-serif;font-weight:normal;right:232.00px;">2 161 170</span>
<div style="left:27px;top:244px;width:775px;height:29px;background:#fff;"></div>
<span class="t" style="top:247.90px;color:#f00;font-size:24px;font-family:'Liberation Serif', serif;font-weight:bold;letter-spacing:0.029px;left:263.5px;">Продажи спортивной обуви</span>
<div style="left:25px;top:242px;width:778px;height:33px;border:2px solid #0e6b38;box-sizing:border-box;"></div>
<div style="left:799px;top:271px;width:5px;height:5px;background:#0e6b38;border:1px solid #fff;box-sizing:content-box;margin:-1px 0 0 -1px;"></div>
<div style="left:1010px;top:202px;width:19px;height:473px;background:#e6e8e7;"></div>
<div style="left:1009px;top:222px;width:1px;height:453px;background:#a8a8a8;"></div>
<div style="left:1013px;top:204px;width:15px;height:15px;background:#fff;border:1px solid #a6a6a6;box-sizing:border-box;"></div>
<svg style="left:1017px;top:209px;" width="8" height="4" viewBox="0 0 8 4"><path d="M0 4H7.5L3.75 0Z" fill="#4f6f5c"/></svg>
<div style="left:1013px;top:218px;width:15px;height:239px;background:#fff;border:1px solid #a6a6a6;box-sizing:border-box;"></div>
<div style="left:1013px;top:457px;width:15px;height:204px;background:#dedede;"></div>
<div style="left:1013px;top:661px;width:15px;height:15px;background:#fff;border:1px solid #a6a6a6;box-sizing:border-box;"></div>
<svg style="left:1017px;top:666px;" width="8" height="4" viewBox="0 0 8 4"><path d="M0 0H7.5L3.75 4Z" fill="#4f6f5c"/></svg>
<div style="left:1px;top:675px;width:1028px;height:1px;background:#c6c6c6;"></div>
<div style="left:1px;top:676px;width:1028px;height:27px;background:#e6e8e7;"></div>
<svg style="left:24px;top:685px;" width="6" height="8" viewBox="0 0 6 8"><path d="M5.5 0V7.5L0.5 3.75Z" fill="#c0c0c0"/></svg>
<svg style="left:53px;top:685px;" width="6" height="8" viewBox="0 0 6 8"><path d="M0.5 0V7.5L5.5 3.75Z" fill="#c0c0c0"/></svg>
<div style="left:98px;top:679px;width:1px;height:20px;background:#a8a8a8;"></div>
<div style="left:205px;top:675px;width:60px;height:25px;background:#fff;border-left:1px solid #c6c6c6;border-right:1px solid #c6c6c6;box-sizing:border-box;"></div>
<div style="left:205px;top:698px;width:60px;height:2px;background:#1d6b41;"></div>
<span class="t" style="top:681.15px;color:#444;font-size:14px;font-family:'Liberation Sans', sans-serif;font-weight:normal;letter-spacing:-0.562px;left:113.2px;">microexcel.ru</span>
<span class="t" style="top:681.15px;color:#1d6b41;font-size:14px;font-family:'Liberation Sans', sans-serif;font-weight:bold;letter-spacing:-1.465px;left:217px;">Лист1</span>
<svg style="left:297px;top:680px;" width="18" height="18" viewBox="0 0 18 18"><circle cx="8.6" cy="8.7" r="7.3" fill="none" stroke="#7aa88a" stroke-width="1.3"/><path d="M8.6 4.5V13M4.4 8.7H12.8" stroke="#7aa88a" stroke-width="1.6"/></svg>
<div style="left:619px;top:684px;width:2px;height:2px;background:#9a9a9a;"></div>
<div style="left:619px;top:689px;width:2px;height:2px;background:#9a9a9a;"></div>
<div style="left:619px;top:694px;width:2px;height:2px;background:#9a9a9a;"></div>
<div style="left:635px;top:682px;width:15px;height:15px;background:#fff;border:1px solid #a6a6a6;box-sizing:border-box;"></div>
<svg style="left:640px;top:686px;" width="4" height="8" viewBox="0 0 4 8"><path d="M4 0V7.5L0 3.75Z" fill="#4f6f5c"/></svg>
<div style="left:649px;top:682px;width:302px;height:15px;background:#fff;border:1px solid #a6a6a6;box-sizing:border-box;"></div>
<div style="left:951px;top:683px;width:46px;height:13px;background:#dedede;"></div>
<div style="left:997px;top:682px;width:15px;height:15px;background:#fff;border:1px solid #a6a6a6;box-sizing:border-box;"></div>
<svg style="left:1003px;top:686px;" width="4" height="8" viewBox="0 0 4 8"><path d="M0 0V7.5L4 3.75Z" fill="#4f6f5c"/></svg>
<div style="left:1px;top:703px;width:1028px;height:1px;background:#cfcfcf;"></div>
<div style="left:1px;top:704px;width:1028px;height:20px;background:#f3f3f3;"></div>
<span class="t" style="top:707.69px;color:#333;font-size:11px;font-family:'Liberation Sans', sans-serif;font-weight:normal;letter-spacing:0.246px;left:6.8px;">Готово</span>
<svg style="left:61px;top:706px;" width="16" height="15" viewBox="0 0 16 15">
<circle cx="4.5" cy="4.5" r="3.2" fill="#5a5a5a"/>
<rect x="8" y="2" width="6" height="2.4" fill="#5a5a5a"/>
<path d="M2.5 9V13.5H14V5" fill="none" stroke="#5a5a5a" stroke-width="1.2"/>
<path d="M5 8.8H7M9 8.8H11.5M5 11H7M9 11H11.5" stroke="#5a5a5a" stroke-width="1.1"/>
</svg>
<div style="left:732px;top:704px;width:37px;height:20px;background:#c6c6c6;"></div>
<svg style="left:742px;top:706px;" width="15" height="15" viewBox="0 0 15 15">
<rect x="1.5" y="1.5" width="12" height="12" fill="#fff" stroke="#5a5a5a" stroke-width="1.6"/>
<path d="M5.5 1.5V13.5M9.5 1.5V13.5M1.5 5.5H13.5M1.5 9.5H13.5" stroke="#5a5a5a" stroke-width="1.5"/>
</svg>
<svg style="left:780px;top:706px;" width="16" height="15" viewBox="0 0 16 15">
<rect x="1.5" y="1.5" width="13" height="12" fill="none" stroke="#5a5a5a" stroke-width="1.6"/>
<rect x="4.5" y="3.5" width="7" height="8" fill="none" stroke="#5a5a5a" stroke-width="1.2"/>
<path d="M6 6H10M6 8H10M6 10H10" stroke="#5a5a5a" stroke-width="1"/>
</svg>
<svg style="left:818px;top:706px;" width="16" height="15" viewBox="0 0 16 15">
<path d="M1.5 1.5H14.5V13.5H1.5Z" fill="none" stroke="#5a5a5a" stroke-width="1.6"/>
<path d="M5 1.5V9H10.5V1.5M7.8 1.5V9" fill="none" stroke="#5a5a5a" stroke-width="1.2"/>
</svg>
<div style="left:850px;top:713px;width:7px;height:2px;background:#5a5a5a;"></div>
<div style="left:860px;top:714px;width:100px;height:1px;background:#a0a0a0;"></div>
<div style="left:908px;top:708px;width:5px;height:11px;background:#5a5a5a;"></div>
<div style="left:964px;top:713px;width:7px;height:2px;background:#5a5a5a;"></div>
<div style="left:966.5px;top:710.5px;width:2px;height:7px;background:#5a5a5a;"></div>
<span class="t" style="top:707.69px;color:#333;font-size:11px;font-family:'Liberation Sans', sans-serif;font-weight:normal;letter-spacing:-0.551px;left:983px;">100 %</span>
<div style="left:0px;top:0px;width:1030px;height:1px;background:#d8d8d8;"></div>
<div style="left:0px;top:0px;width:1px;height:725px;background:#c8c8c8;"></div>
<div style="left:1029px;top:0px;width:1px;height:725px;background:#c8c8c8;"></div>
<div style="left:0px;top:724px;width:1030px;height:1px;background:#c8c8c8;"></div>
<div style="left:18px;top:237px;width:792px;height:43px;border:3px solid #f00;border-radius:8px;box-sizing:border-box;"></div>
<div style="left:103px;top:67px;width:211px;height:90px;border:3px solid #f00;border-radius:8px;box-sizing:border-box;"></div>
<div style="left:133px;top:102px;width:53px;height:28px;border:3px solid #f00;border-radius:7px;box-sizing:border-box;"></div>
<div style="left:238px;top:102px;width:69px;height:28px;border:3px solid #f00;border-radius:7px;box-sizing:border-box;"></div>
</body></html>
